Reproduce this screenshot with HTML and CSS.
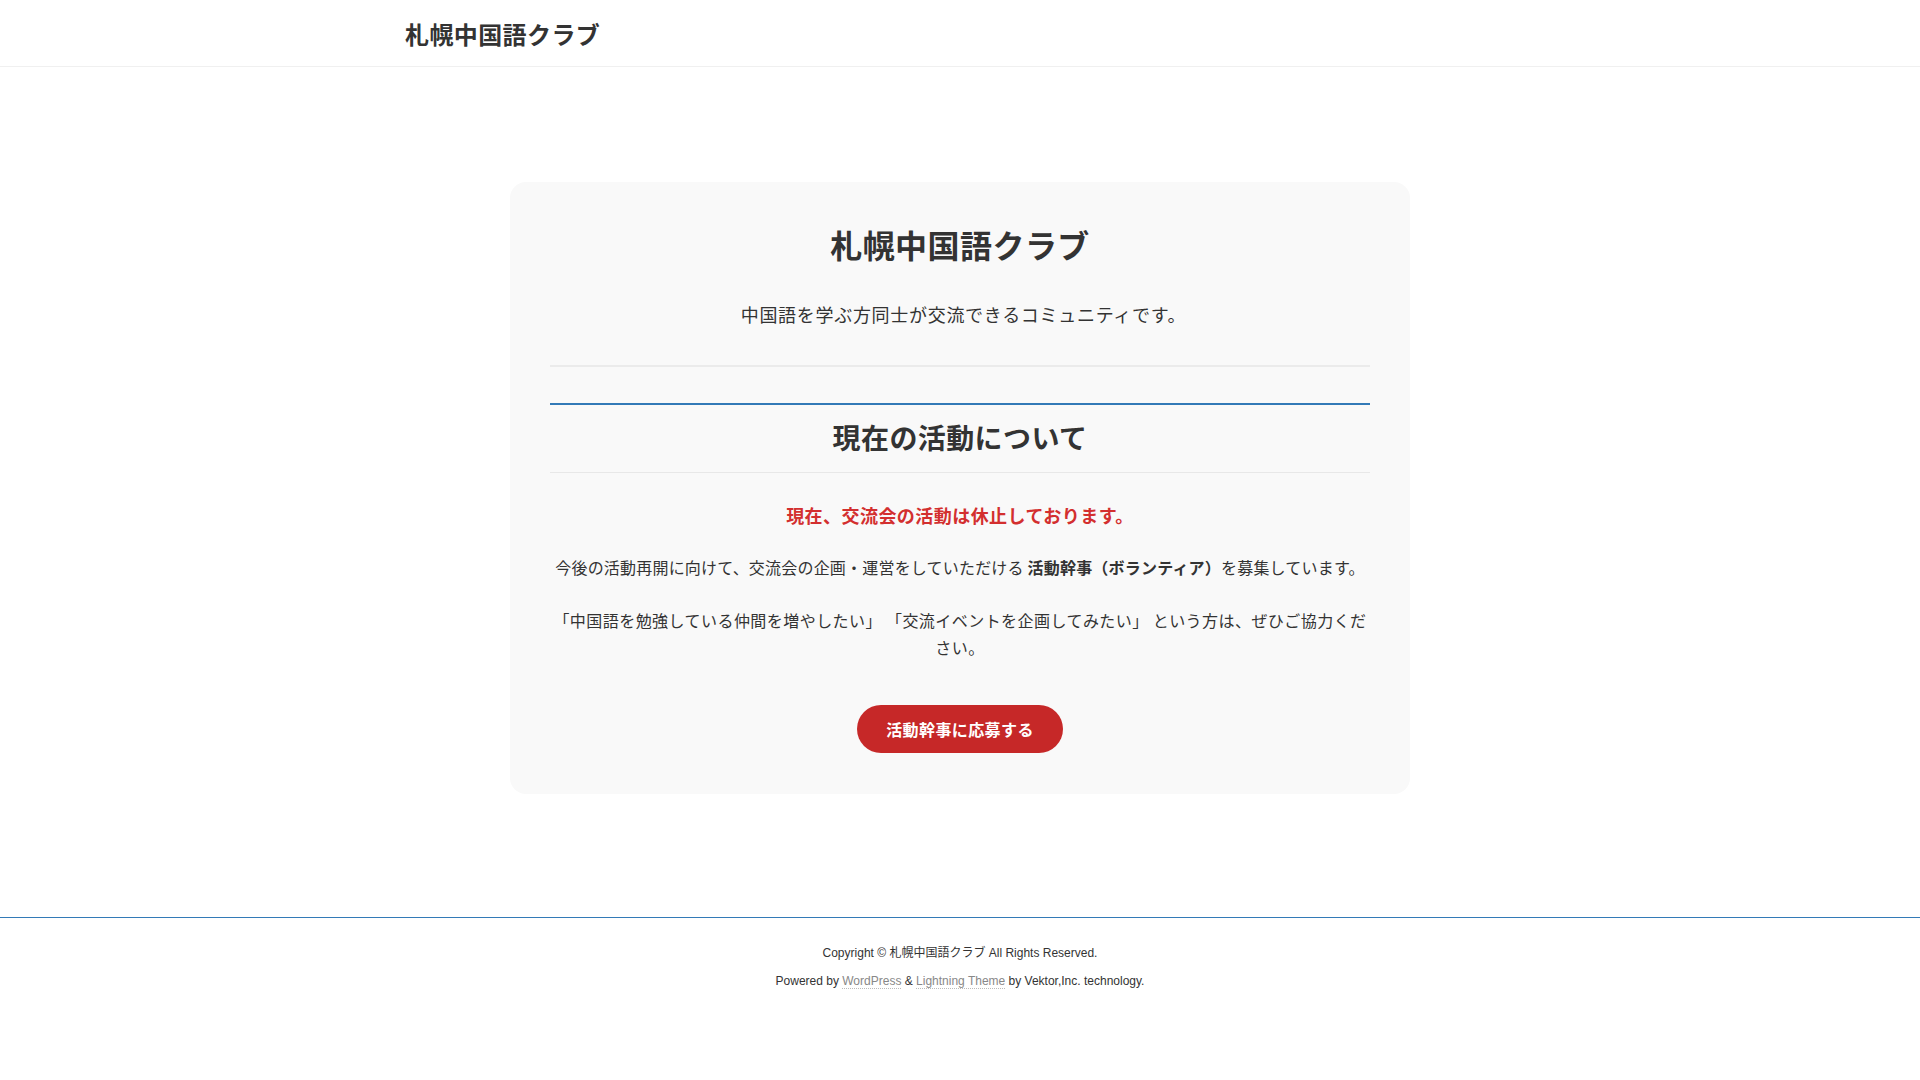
FILE: index.html
```html
<!DOCTYPE html>
<html lang="ja">
<head>
<meta charset="utf-8">
<title>札幌中国語クラブ</title>
<link rel="stylesheet" href="styles.css">
</head>
<body>
<header class="site-header">
  <div class="container">
    <a class="site-title" href="#">札幌中国語クラブ</a>
  </div>
</header>
<main class="site-main">
  <section class="card">
    <h1 class="card-title">札幌中国語クラブ</h1>
    <p class="card-lead">中国語を学ぶ方同士が交流できるコミュニティです。</p>
    <hr class="divider">
    <h2 class="section-title">現在の活動について</h2>
    <p class="notice">現在、交流会の活動は休止しております。</p>
    <p class="text text-recruit">今後の活動再開に向けて、交流会の企画・運営をしていただける <strong>活動幹事（ボランティア）</strong>を募集しています。</p>
    <p class="text text-invite">「中国語を勉強している仲間を増やしたい」 「交流イベントを企画してみたい」 という方は、ぜひご協力ください。</p>
    <div class="btn-wrap">
      <a class="btn" href="#">活動幹事に応募する</a>
    </div>
  </section>
</main>
<footer class="site-footer">
  <p class="copy">Copyright © 札幌中国語クラブ All Rights Reserved.</p>
  <p class="powered">Powered by <a href="#">WordPress</a> &amp; <a href="#">Lightning Theme</a> by Vektor,Inc. technology.</p>
</footer>
</body>
</html>
```

FILE: styles.css
```css
html, body {
  margin: 0;
  padding: 0;
  background: #fff;
}
body {
  font-family: "Noto Sans CJK JP", "Liberation Sans", sans-serif;
  color: #333;
  font-size: 16px;
}
a { text-decoration: none; }

.site-header {
  height: 66px;
  border-bottom: 1px solid #f0f0f0;
  display: flex;
  align-items: center;
}
.container {
  width: 1110px;
  margin: 0 auto;
}
.site-title {
  font-size: 24px;
  font-weight: 700;
  color: #333;
  line-height: 1;
  display: block;
  margin-top: 1px;
  letter-spacing: 0.4px;
}

.site-main {
  padding: 115px 0 123px;
}
.card {
  width: 820px;
  margin: 0 auto;
  background: #f9f9f9;
  border-radius: 16px;
  padding: 40px 40px 41px;
  text-align: center;
}
.card-title {
  margin: 0;
  font-size: 32px;
  line-height: 44px;
  font-weight: 700;
  letter-spacing: 0.45px;
}
.card-lead {
  margin: 33px 0 0;
  padding-left: 7px;
  font-size: 18px;
  line-height: 30px;
  letter-spacing: 0.7px;
}
.divider {
  margin: 36px 0 0;
  border: 0;
  height: 2px;
  background: #ebebeb;
}
.section-title {
  margin: 36px 0 0;
  font-size: 28px;
  line-height: 40px;
  font-weight: 700;
  padding: 12px 0 15px;
  border-top: 2px solid #337ab7;
  border-bottom: 1px solid #e8e8e8;
  letter-spacing: 0.4px;
}
.notice {
  margin: 27px 0 0;
  font-size: 18px;
  line-height: 30px;
  font-weight: 700;
  color: #d32f2f;
  letter-spacing: 0.45px;
}
.text {
  margin: 24px 0 0;
  line-height: 27px;
}
.text-recruit {
  letter-spacing: 0.2px;
}
.text-invite {
  margin-top: 26px;
  letter-spacing: 0.45px;
}
.text strong {
  font-weight: 700;
}
.btn-wrap {
  margin-top: 44px;
  display: flex;
  justify-content: center;
}
.btn {
  display: block;
  width: 206px;
  height: 48px;
  line-height: 48px;
  border-radius: 24px;
  background: #c62828;
  color: #fff;
  font-weight: 700;
  font-size: 16px;
  letter-spacing: 0.4px;
}

.site-footer {
  border-top: 1px solid #337ab7;
  padding: 26px 0 80px;
  text-align: center;
  font-family: "Liberation Sans", "Noto Sans CJK JP", sans-serif;
  font-size: 12px;
  color: #333;
}
.site-footer p {
  margin: 0 0 10px;
  line-height: 18px;
}
.site-footer a {
  color: #888;
  border-bottom: 1px dotted #bbb;
}
```
